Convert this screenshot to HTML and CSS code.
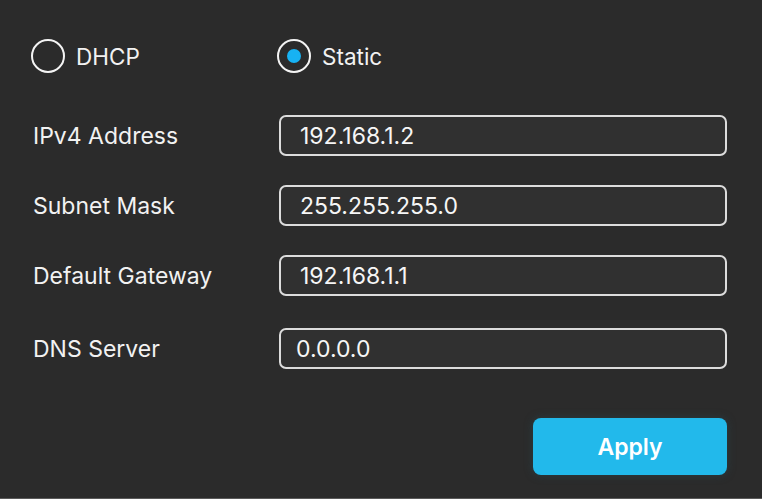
FILE: index.html
```html
<!DOCTYPE html>
<html>
<head>
<meta charset="utf-8">
<link rel="stylesheet" href="styles.css">
</head>
<body>
<div class="panel">
  <div class="modes">
    <label class="radio"><span class="ring"></span><span class="rlabel">DHCP</span></label>
    <label class="radio static"><span class="ring on"><span class="dot"></span></span><span class="rlabel">Static</span></label>
  </div>
  <div class="form">
    <div class="row"><span class="flabel">IPv4 Address</span><div class="input">192.168.1.2</div></div>
    <div class="row"><span class="flabel">Subnet Mask</span><div class="input">255.255.255.0</div></div>
    <div class="row"><span class="flabel">Default Gateway</span><div class="input">192.168.1.1</div></div>
    <div class="row last"><span class="flabel">DNS Server</span><div class="input dns">0.0.0.0</div></div>
  </div>
  <div class="actions"><button class="apply">Apply</button></div>
</div>
</body>
</html>
```
FILE: styles.css
```css
html, body {
  margin: 0;
  padding: 0;
}
body {
  width: 762px;
  height: 499px;
  background: #2b2b2b;
  font-family: Inter, "Noto Sans", sans-serif;
  color: #f2f2f2;
  overflow: hidden;
  box-sizing: border-box;
  border-bottom: 1px solid #5a5a5a;
}
.panel {
  padding: 39px 35px 0 31px;
  display: flex;
  flex-direction: column;
}
.modes {
  display: flex;
  align-items: center;
  height: 34px;
}
.radio {
  display: flex;
  align-items: center;
  gap: 11px;
  width: 246px;
}
.ring {
  width: 34px;
  height: 34px;
  box-sizing: border-box;
  border: 2.5px solid #f4f4f4;
  border-radius: 50%;
  display: flex;
  align-items: center;
  justify-content: center;
}
.dot {
  width: 14px;
  height: 14px;
  border-radius: 50%;
  background: #17b2f3;
}
.rlabel {
  font-size: 22.5px;
}
.form {
  margin-top: 42px;
  display: flex;
  flex-direction: column;
  gap: 29px;
}
.row {
  display: flex;
  align-items: center;
  height: 41px;
}
.row.last {
  margin-top: 3px;
}
.flabel {
  width: 248px;
  box-sizing: border-box;
  padding-left: 2px;
  font-size: 23px;
}
.input {
  flex: 1;
  height: 41px;
  box-sizing: border-box;
  border: 2px solid #dcdcdc;
  border-radius: 7px;
  background: #303030;
  padding-left: 19px;
  display: flex;
  align-items: center;
  font-size: 23px;
  color: #f6f6f6;
}
.input.dns {
  padding-left: 15px;
}
.actions {
  display: flex;
  justify-content: flex-end;
  margin-top: 49px;
}
.apply {
  width: 194px;
  height: 57px;
  border: none;
  border-radius: 8px;
  background: #22b9eb;
  color: #fff;
  font-family: Inter, "Noto Sans", sans-serif;
  font-size: 23px;
  font-weight: 600;
  box-shadow: 0 0 10px rgba(40, 80, 90, 0.45);
}
```
